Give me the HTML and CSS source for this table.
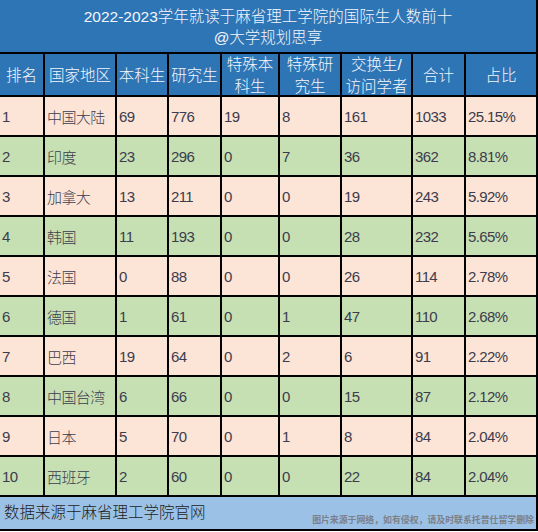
FILE: index.html
```html
<!DOCTYPE html>
<html lang="zh">
<head>
    <meta charset="UTF-8">
    <title>麻省理工学院国际生人数前十</title>
    <link rel="stylesheet" href="styles.css">
</head>
<body>
    <div class="sheet">
        <div class="sheet-title">
            <div>2022-2023学年就读于麻省理工学院的国际生人数前十</div>
            <div>@大学规划思享</div>
        </div>

        <div class="grid">
            <div class="row head">
                <div>排名</div>
                <div>国家地区</div>
                <div>本科生</div>
                <div>研究生</div>
                <div>特殊本<br>科生</div>
                <div>特殊研<br>究生</div>
                <div>交换生/<br>访问学者</div>
                <div>合计</div>
                <div>占比</div>
            </div>
            <div class="row pink">
                <div>1</div><div>中国大陆</div><div>69</div><div>776</div><div>19</div><div>8</div><div>161</div><div>1033</div><div>25.15%</div>
            </div>
            <div class="row green">
                <div>2</div><div>印度</div><div>23</div><div>296</div><div>0</div><div>7</div><div>36</div><div>362</div><div>8.81%</div>
            </div>
            <div class="row pink">
                <div>3</div><div>加拿大</div><div>13</div><div>211</div><div>0</div><div>0</div><div>19</div><div>243</div><div>5.92%</div>
            </div>
            <div class="row green">
                <div>4</div><div>韩国</div><div>11</div><div>193</div><div>0</div><div>0</div><div>28</div><div>232</div><div>5.65%</div>
            </div>
            <div class="row pink">
                <div>5</div><div>法国</div><div>0</div><div>88</div><div>0</div><div>0</div><div>26</div><div>114</div><div>2.78%</div>
            </div>
            <div class="row green">
                <div>6</div><div>德国</div><div>1</div><div>61</div><div>0</div><div>1</div><div>47</div><div>110</div><div>2.68%</div>
            </div>
            <div class="row pink">
                <div>7</div><div>巴西</div><div>19</div><div>64</div><div>0</div><div>2</div><div>6</div><div>91</div><div>2.22%</div>
            </div>
            <div class="row green">
                <div>8</div><div>中国台湾</div><div>6</div><div>66</div><div>0</div><div>0</div><div>15</div><div>87</div><div>2.12%</div>
            </div>
            <div class="row pink">
                <div>9</div><div>日本</div><div>5</div><div>70</div><div>0</div><div>1</div><div>8</div><div>84</div><div>2.04%</div>
            </div>
            <div class="row green">
                <div>10</div><div>西班牙</div><div>2</div><div>60</div><div>0</div><div>0</div><div>22</div><div>84</div><div>2.04%</div>
            </div>
        </div>

        <div class="sheet-footer">
            数据来源于麻省理工学院官网
            <span class="watermark">图片来源于网络，如有侵权，请及时联系托普仕留学删除</span>
        </div>
    </div>
</body>
</html>
```

FILE: styles.css
```css
* {
    margin: 0;
    padding: 0;
    box-sizing: border-box;
}

body {
    background: #fff;
    font-family: 'Liberation Sans', 'Noto Sans CJK SC', sans-serif;
    font-weight: 300;
}

.sheet {
    width: 538px;
    background: #000;
    padding: 0 2px 2px 0;
    overflow: hidden;
}

.sheet-title {
    height: 52px;
    margin-bottom: 2px;
    background: #2e75b6;
    color: #f4f6fb;
    font-size: 15.5px;
    line-height: 21px;
    text-align: center;
    padding-top: 6px;
}

.grid {
    display: grid;
    grid-template-columns: 43px 70px 50px 51px 56px 60px 69px 51px 70px;
    grid-auto-rows: 38px;
    grid-template-rows: 41px;
    gap: 2px;
    margin-bottom: 2px;
}

.row {
    display: contents;
}

.row > div {
    display: flex;
    align-items: center;
    padding-left: 2px;
    font-size: 15px;
    letter-spacing: -0.6px;
    color: #3c3c4c;
    white-space: nowrap;
}

.row.head > div {
    background: #2e75b6;
    color: #f4f6fb;
    justify-content: center;
    text-align: center;
    padding-left: 0;
    font-size: 15.5px;
    letter-spacing: 0;
    line-height: 22px;
    padding-top: 2px;
}

.row.pink > div {
    background: #fce4d6;
}

.row.green > div {
    background: #c6e0b4;
}

.sheet-footer {
    position: relative;
    height: 32px;
    background: #9bc2e6;
    color: #1c1c24;
    font-size: 15.5px;
    line-height: 32px;
    padding-left: 4px;
}

.watermark {
    position: absolute;
    right: 2px;
    top: 17px;
    font-size: 8.9px;
    line-height: 12px;
    font-weight: bold;
    color: #7c8088;
    white-space: nowrap;
}
```
